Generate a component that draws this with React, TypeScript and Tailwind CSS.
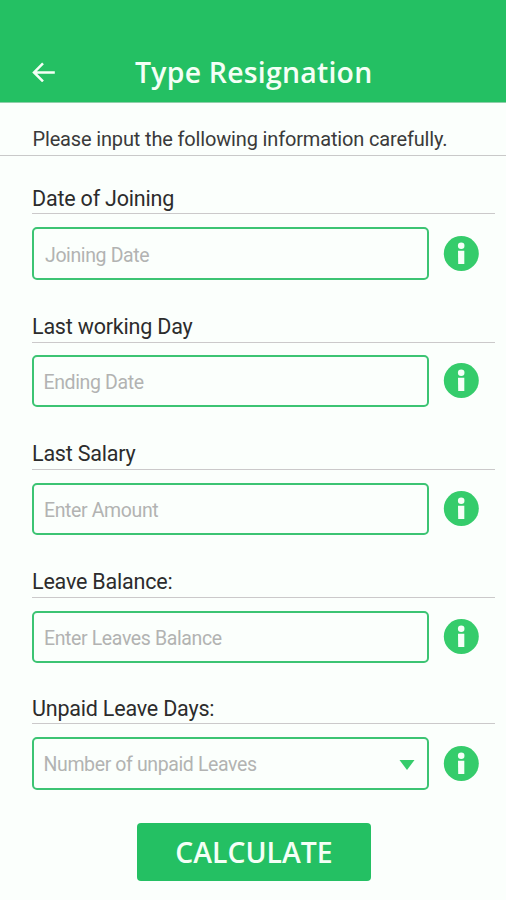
import clsx from "clsx";

type Field = {
  label: string;
  placeholder: string;
  select?: boolean;
  labelClass: string;
  boxClass: string;
  inputClass: string;
};

const fields: Field[] = [
  {
    label: "Date of Joining",
    placeholder: "Joining Date",
    labelClass: "h-[29px] mb-[13px] leading-[27px]",
    boxClass: "h-[53px]",
    inputClass: "pl-[11px] pt-1",
  },
  {
    label: "Last working Day",
    placeholder: "Ending Date",
    labelClass: "h-[31px] mb-[12px] leading-[29px]",
    boxClass: "h-[52px]",
    inputClass: "pl-[9.5px] pt-[3px]",
  },
  {
    label: "Last Salary",
    placeholder: "Enter Amount",
    labelClass: "h-[31px] mb-[13px] leading-[29px]",
    boxClass: "h-[52px]",
    inputClass: "pl-[10px] pt-[3px]",
  },
  {
    label: "Leave Balance:",
    placeholder: "Enter Leaves Balance",
    labelClass: "h-[31px] mb-[13px] leading-[29px]",
    boxClass: "h-[52px]",
    inputClass: "pl-[10px] pt-[3px]",
  },
  {
    label: "Unpaid Leave Days:",
    placeholder: "Number of unpaid Leaves",
    select: true,
    labelClass: "h-[29px] mb-[13px] leading-[27px]",
    boxClass: "h-[53px]",
    inputClass: "pl-[9.5px] pt-[2px]",
  },
];

function BackArrow() {
  return (
    <svg width="24" height="20" viewBox="0 0 24 20" fill="none" stroke="#f4fff6" strokeWidth="2.5">
      <path d="M11 1.4 L2 10.4 L11 19.4 M2.2 10.4 H22.8" />
    </svg>
  );
}

function InfoIcon() {
  return (
    <svg width="36" height="36" viewBox="0 0 36 36" className="shrink-0">
      <circle cx="18.3" cy="17.5" r="17.5" fill="#35cc6b" />
      <circle cx="18.2" cy="9.8" r="3.3" fill="#f6fff8" />
      <path d="M15 14.7 H21.3 V28 H15.2 Z" fill="#f6fff8" />
    </svg>
  );
}

function FieldRow({ field }: { field: Field }) {
  return (
    <section>
      <div className="pl-8 pr-[11px]">
        <label
          className={clsx(
            "block border-b border-[#cbc9ca] text-[21.5px] tracking-[-0.2px] text-[#2c2c2c]",
            field.labelClass
          )}
        >
          {field.label}
        </label>
      </div>
      <div className="flex items-center pl-8">
        <div
          className={clsx(
            "flex w-[397px] items-center rounded-[5px] border-2 border-[#3cc473] pr-3",
            field.boxClass
          )}
        >
          <input
            readOnly
            placeholder={field.placeholder}
            className={clsx(
              "min-w-0 flex-1 bg-transparent text-[19.5px] tracking-[-0.38px] outline-none placeholder:text-[#b2b3b2]",
              field.inputClass
            )}
          />
          {field.select && (
            <svg width="16" height="10" viewBox="0 0 16 10" className="mt-[3px]">
              <path d="M0.5 0 H15.5 L8 10 Z" fill="#35cc6b" />
            </svg>
          )}
        </div>
        <button className="ml-[14px]">
          <InfoIcon />
        </button>
      </div>
    </section>
  );
}

export default function App() {
  return (
    <div className="flex h-[900px] w-[506px] flex-col overflow-hidden bg-[#fbfffc] font-['Roboto',sans-serif]">
      <header className="flex h-[103px] items-end border-b border-[#8fcfaa] bg-[#24c063] pb-5 pl-8">
        <button>
          <BackArrow />
        </button>
        <h1 className="ml-[79px] font-['Open_Sans',sans-serif] text-[28.4px] leading-[20px] font-semibold tracking-[0.24px] text-[#f4fff6]">
          Type Resignation
        </h1>
      </header>

      <p className="h-[53px] border-b border-[#c9c9c9] pt-[22px] pl-[32.5px] text-[20px] leading-[28px] tracking-[-0.155px] text-[#3a3a3a]">
        Please input the following information carefully.
      </p>

      <main className="flex flex-col gap-8 pt-[29px]">
        {fields.map((field) => (
          <FieldRow key={field.label} field={field} />
        ))}
      </main>

      <button className="mt-[33px] ml-[137px] h-[58px] w-[234px] rounded-[4px] bg-[#24c063] font-['Open_Sans',sans-serif] text-[28.4px] font-semibold text-[#f4fff6]">
        CALCULATE
      </button>
    </div>
  );
}
